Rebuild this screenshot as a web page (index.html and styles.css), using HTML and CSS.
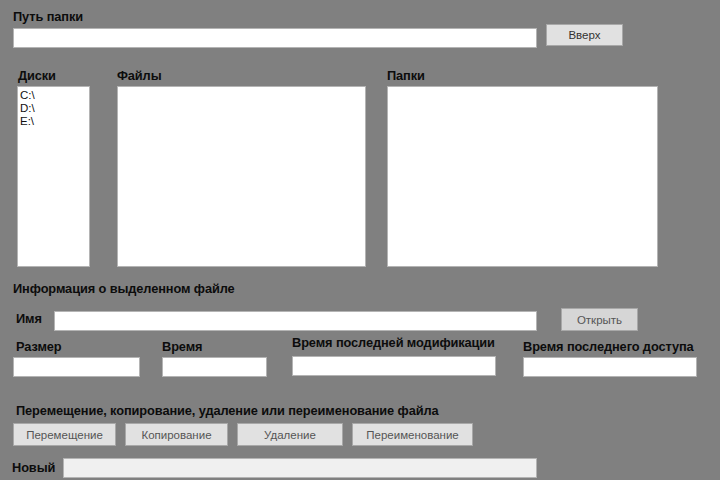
FILE: index.html
```html
<!DOCTYPE html>
<html lang="ru">
<head>
  <meta charset="UTF-8">
  <title>Файловый менеджер</title>
  <link rel="stylesheet" href="styles.css">
</head>
<body>
  <div class="form">
    <div class="lbl lbl-path">Путь папки</div>
    <div class="path-row">
      <input type="text" class="tb tb-path">
      <button class="btn btn-up">Вверх</button>
    </div>

    <div class="lists">
      <div class="col col-disks">
        <div class="lbl">Диски</div>
        <div class="listbox">
          <div>C:\</div>
          <div>D:\</div>
          <div>E:\</div>
        </div>
      </div>
      <div class="col col-files">
        <div class="lbl">Файлы</div>
        <div class="listbox"></div>
      </div>
      <div class="col col-dirs">
        <div class="lbl">Папки</div>
        <div class="listbox"></div>
      </div>
    </div>

    <div class="lbl lbl-info">Информация о выделенном файле</div>
    <div class="name-row">
      <div class="lbl lbl-name">Имя</div>
      <input type="text" class="tb tb-name">
      <button class="btn btn-open">Открыть</button>
    </div>

    <div class="fields">
      <div class="field f-size">
        <div class="lbl">Размер</div>
        <input type="text" class="tb">
      </div>
      <div class="field f-time">
        <div class="lbl">Время</div>
        <input type="text" class="tb">
      </div>
      <div class="field f-mod">
        <div class="lbl">Время последней модификации</div>
        <input type="text" class="tb">
      </div>
      <div class="field f-acc">
        <div class="lbl">Время последнего доступа</div>
        <input type="text" class="tb">
      </div>
    </div>

    <div class="lbl lbl-ops">Перемещение, копирование, удаление или переименование файла</div>
    <div class="ops">
      <button class="btn op-move">Перемещение</button>
      <button class="btn op-copy">Копирование</button>
      <button class="btn op-del">Удаление</button>
      <button class="btn op-ren">Переименование</button>
    </div>

    <div class="new-row">
      <div class="lbl lbl-new">Новый</div>
      <input type="text" class="tb tb-new">
    </div>
  </div>
</body>
</html>
```

FILE: styles.css
```css
body { margin: 0; background: #808080; font-family: "Liberation Sans", Arial, sans-serif; font-size: 11px; color: #000; }
.form { padding-top: 10px; width: 720px; height: 480px; overflow: hidden; }
.lbl { font-weight: bold; font-size: 12.8px; letter-spacing: -0.1px; height: 14px; line-height: 14px; white-space: nowrap; color: #0c0c0c; }
.tb { box-sizing: border-box; height: 20px; margin: 0; padding: 0 3px; border: 1px solid #b4b4b4; background: #fff; font: inherit; }
.btn { box-sizing: border-box; height: 23px; margin: 0; padding: 0; border: 1px solid #a8a8a8; background: #e1e1e1; color: #333; font: inherit; font-size: 11.5px; }

.lbl-path { margin-left: 13px; }
.path-row { display: flex; align-items: flex-start; height: 24px; }
.tb-path { margin: 4px 0 0 13px; width: 524px; }
.btn-up { margin-left: 9px; width: 77px; height: 22px; }

.lists { display: flex; margin-top: 21px; }
.col .lbl { margin-bottom: 3px; margin-left: 1px; }
.col-files .lbl, .col-dirs .lbl { margin-left: 0; }
.listbox { box-sizing: border-box; height: 181px; background: #fff; border: 1px solid #b4b4b4; padding: 2px 0 0 2px; line-height: 13px; font-size: 11.5px; color: #111; }
.col-disks { margin-left: 17px; width: 73px; }
.col-files { margin-left: 27px; width: 249px; }
.col-dirs { margin-left: 21px; width: 271px; }

.lbl-info { margin: 15px 0 0 13px; }
.name-row { display: flex; align-items: flex-start; margin-top: 12px; }
.lbl-name { margin: 4px 0 0 16px; width: 38px; }
.tb-name { margin-top: 3px; width: 483px; }
.btn-open { margin-left: 24px; width: 77px; background: #d6d6d6; color: #555; }

.fields { display: flex; margin-top: 9px; }
.field .tb { margin-top: 3px; display: block; }
.f-size { margin-left: 13px; }
.f-size .lbl { margin-left: 3px; }
.f-size .tb { width: 127px; }
.f-time { margin-left: 22px; }
.f-time .tb { width: 105px; }
.f-mod { margin-left: 25px; }
.f-mod .lbl { margin-top: -4px; }
.f-mod .tb { width: 204px; margin-top: 6px; }
.f-acc { margin-left: 27px; }
.f-acc .tb { width: 174px; }

.lbl-ops { margin: 27px 0 0 16px; }
.ops { display: flex; margin-top: 5px; }
.ops .btn { color: #555; }
.op-move { margin-left: 13px; width: 103px; }
.op-copy { margin-left: 9px; width: 103px; }
.op-del { margin-left: 9px; width: 106px; }
.op-ren { margin-left: 9px; width: 121px; }

.new-row { display: flex; align-items: center; margin-top: 12px; }
.lbl-new { margin-left: 12px; width: 51px; }
.tb-new { width: 474px; background: #f0f0f0; }
```
